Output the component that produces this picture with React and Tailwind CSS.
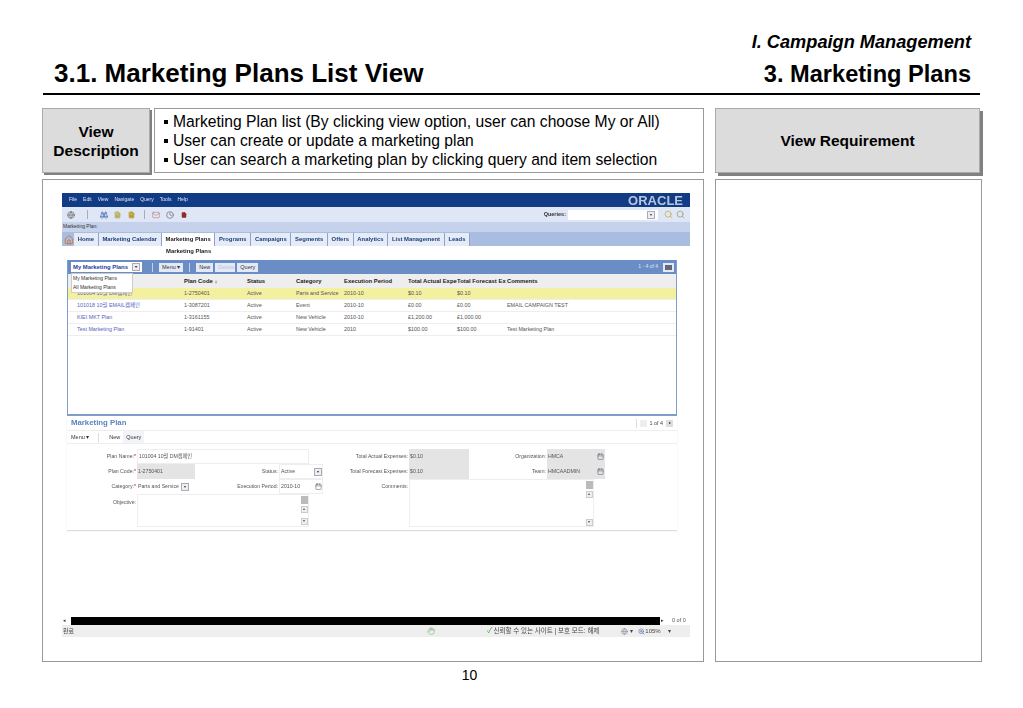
import { Binoculars, FileText, Clock, Mail, Search, Home, ZoomIn, Globe, Hand, Calendar } from 'lucide-react'

const rows = [
  { name: '101004 10월 DM캠페인', code: '1-2750401', cat: 'Parts and Service', per: '2010-10', act: '$0.10', fc: '$0.10', com: '', on: true },
  { name: '101018 10월 EMAIL캠페인', code: '1-3087201', cat: 'Event', per: '2010-10', act: '£0.00', fc: '£0.00', com: 'EMAIL CAMPAIGN TEST' },
  { name: 'KIEI MKT Plan', code: '1-3161155', cat: 'New Vehicle', per: '2010-10', act: '£1,200.00', fc: '£1,000.00', com: '' },
  { name: 'Test Marketing Plan', code: '1-91401', cat: 'New Vehicle', per: '2010', act: '$100.00', fc: '$100.00', com: 'Test Marketing Plan' },
]

const tabs = ['Home', 'Marketing Calendar', 'Marketing Plans', 'Programs', 'Campaigns', 'Segments', 'Offers', 'Analytics', 'List Management', 'Leads']
const menus = ['File', 'Edit', 'View', 'Navigate', 'Query', 'Tools', 'Help']
const tableCols = 'grid grid-cols-[107px_63px_49px_48px_64px_49px_50px_1fr] pl-[9px]'
const notes = [
  'Marketing Plan list (By clicking view option, user can choose My or All)',
  'User can create or update a marketing plan',
  'User can search a marketing plan by clicking query and item selection',
]

function Btn({ children, className = '' }) {
  return <span className={`flex h-[9px] items-center bg-[#e3e9f6] px-[3px] text-[5.5px] text-[#333] ${className}`}>{children}</span>
}

function Label({ children, req }) {
  return (
    <span className="flex items-center justify-end whitespace-nowrap pr-[1px] text-[#555]">
      {children}
      {req && <span className="text-[#c00]">*</span>}
    </span>
  )
}

function Pick() {
  return <span className="flex h-[8px] w-[8px] shrink-0 items-center justify-center border border-[#aab] bg-[#eee] text-[4px] leading-none text-[#333]">▾</span>
}

function Cal() {
  return <Calendar className="h-[7px] w-[7px] shrink-0 text-[#667]" />
}

function Scroll() {
  return (
    <div className="flex h-full w-[8px] flex-col items-center gap-[2px] text-[4px] leading-none text-[#555]">
      <span className="h-[8px] w-[7px] bg-[#bbb]" />
      <span className="h-[7px] w-[7px] border border-[#ccc] bg-[#eee] text-center">▴</span>
      <span className="flex-1" />
      <span className="h-[7px] w-[7px] border border-[#ccc] bg-[#eee] text-center">▾</span>
    </div>
  )
}

function Shot() {
  return (
    <div className="flex h-[444px] w-[628px] flex-col font-['Liberation_Sans',sans-serif] blur-[0.5px]">
      {/* menu bar */}
      <div className="flex h-[14px] items-center bg-[#113b85] pl-[7px] pr-[7px] text-[5px] text-[#dfe6f5]">
        <div className="flex gap-[6px]">{menus.map(m => <span key={m}>{m}</span>)}</div>
        <span className="ml-auto text-[13px] font-bold leading-none text-[#b7c5dd]">ORACLE</span>
      </div>
      {/* toolbar */}
      <div className="flex h-[15px] items-center bg-[#dfe6f6] pl-[5px] pr-[5px]">
        <Globe className="h-[8px] w-[8px] text-[#666]" />
        <span className="ml-[12px] h-[9px] w-px bg-[#aab]" />
        <Binoculars className="ml-[12px] h-[8px] w-[8px] text-[#3f66ad]" />
        <FileText className="ml-[6px] h-[8px] w-[7px] fill-[#e4d98a] text-[#8a8440]" />
        <FileText className="ml-[7px] h-[8px] w-[7px] fill-[#e6c84a] text-[#8a7420]" />
        <span className="ml-[9px] h-[9px] w-px bg-[#aab]" />
        <Mail className="ml-[7px] h-[8px] w-[8px] text-[#b98a8a]" />
        <Clock className="ml-[6px] h-[8px] w-[8px] text-[#667]" />
        <FileText className="ml-[7px] h-[8px] w-[6px] fill-[#a33] text-[#722]" />
        <span className="ml-auto text-[5.5px] font-bold text-[#333]">Queries:</span>
        <span className="ml-[2px] flex h-[10px] w-[90px] items-center justify-end bg-white pr-[3px]"><Pick /></span>
        <Search className="ml-[6px] h-[9px] w-[9px] text-[#c9a94a]" />
        <Search className="ml-[3px] h-[9px] w-[9px] text-[#9aa060]" />
      </div>
      <div className="flex h-[10px] items-center bg-[#c6d2ec] pl-[1px] text-[5px] text-[#333]">Marketing Plan:</div>
      {/* tabs */}
      <div className="flex h-[14px] items-end bg-[#a9bde1] pl-[2px]">
        <Home className="mb-[1px] h-[10px] w-[10px] text-[#c8702a]" />
        {tabs.map(t => (
          <span key={t} className={`flex h-[13px] items-center whitespace-nowrap border-r border-[#8ea4cc] px-[3.7px] text-[5.9px] font-bold text-[#1c3f7a] ${t === 'Marketing Plans' ? 'bg-white text-[#222]' : 'bg-[#e5ebf7]'}`}>{t}</span>
        ))}
      </div>
      <div className="flex h-[10px] items-center pl-[104px] text-[5.9px] font-bold text-[#222]">Marketing Plans</div>
      {/* list applet */}
      <div className="relative ml-[5px] mt-[4px] flex h-[156px] w-[610px] flex-col border-b-2 border-l border-r border-[#7f9ccb]">
        <div className="flex h-[14px] items-center bg-[#6b8dc5] pl-[3px] pr-[2px]">
          <span className="flex h-[10px] w-[71px] items-center justify-between bg-white px-[2px] text-[5.9px] font-bold text-[#1c3fa0]">My Marketing Plans<Pick /></span>
          <span className="ml-[10px] mr-[6px] h-[9px] w-px bg-[#c6d2ec]" />
          <Btn>Menu ▾</Btn>
          <span className="ml-[6px] mr-[6px] h-[9px] w-px bg-[#c6d2ec]" />
          <Btn>New</Btn>
          <Btn className="ml-[2px] w-[20px] bg-[#b9c6de] text-[#b9c6de]">Delete</Btn>
          <Btn className="ml-[2px]">Query</Btn>
          <span className="ml-auto text-[5px] text-[#dfe6f5]">1 - 4 of 4</span>
          <span className="ml-[5px] flex h-[9px] w-[11px] items-center justify-center bg-[#e3e9f6]"><span className="h-[5px] w-[7px] bg-[#667]" /></span>
        </div>
        <div className={`${tableCols} h-[14px] items-center bg-[#eeeeee] text-[5.9px] font-bold text-[#222]`}>
          <span className="pl-[47px]">e</span>
          <span>Plan Code ↓</span>
          <span>Status</span>
          <span>Category</span>
          <span className="whitespace-nowrap">Execution Period</span>
          <span className="overflow-hidden whitespace-nowrap">Total Actual Expe</span>
          <span className="overflow-hidden whitespace-nowrap">Total Forecast Ex</span>
          <span>Comments</span>
        </div>
        {rows.map(r => (
          <div key={r.code} className={`${tableCols} h-[12px] items-center border-b border-[#eee] text-[5.4px] text-[#555] ${r.on ? 'bg-[#f3f0a0]' : 'bg-white'}`}>
            <span className="font-['Liberation_Sans','Noto_Sans_CJK_KR',sans-serif] text-[#5a5fc0]">{r.name}</span>
            <span>{r.code}</span>
            <span>Active</span>
            <span className="whitespace-nowrap">{r.cat}</span>
            <span>{r.per}</span>
            <span>{r.act}</span>
            <span>{r.fc}</span>
            <span>{r.com}</span>
          </div>
        ))}
        {/* selected row marker and open view dropdown */}
        <span className="absolute left-[3px] top-[29px] text-[5px] leading-none text-black">➤</span>
        <div className="absolute left-[3px] top-[13px] flex h-[20px] w-[62px] flex-col justify-center gap-[2px] border border-[#ccc] bg-white pl-[1px] text-[5px] text-[#333]">
          <span>My Marketing Plans</span>
          <span>All Marketing Plans</span>
        </div>
      </div>
      {/* form applet */}
      <div className="ml-[5px] flex w-[610px] flex-col shadow-[0_1px_1px_#ddd]">
        <div className="flex h-[15px] items-center justify-between border-b border-[#eee] pl-[4px] pr-[4px]">
          <span className="text-[7.8px] font-bold text-[#5b83c0]">Marketing Plan</span>
          <div className="flex items-center gap-[3px] text-[5.4px] text-[#444]">
            <span className="h-[9px] w-px bg-[#ddd]" />
            <span className="h-[7px] w-[7px] bg-[#eee]" />
            <span>1 of 4</span>
            <span className="flex h-[7px] w-[7px] items-center justify-center bg-[#ddd] text-[4px] text-[#222]">▸</span>
          </div>
        </div>
        <div className="flex h-[13px] items-center border-b border-[#eee] pl-[4px] text-[5.5px] text-[#333]">
          <span>Menu ▾</span>
          <span className="ml-[9px] h-[9px] w-px bg-[#ddd]" />
          <span className="ml-[7px] flex h-[12px] items-center px-[3px]">New</span>
          <span className="flex h-[12px] items-center bg-[#f2f4fa] px-[3px]">Query</span>
        </div>
        <div className="grid h-[86px] grid-cols-[70px_58px_84px_44px_86px_60px_78px_58px] grid-rows-[15px_15px_15px_33px] content-start pt-[5px] text-[5.2px] text-[#555]">
          <Label req>Plan Name:</Label>
          <span className="col-span-3 flex w-[172px] items-center border border-[#eee] pl-[1px] font-['Liberation_Sans','Noto_Sans_CJK_KR',sans-serif]">101004 10월 DM캠페인</span>
          <Label>Total Actual Expenses:</Label>
          <span className="flex items-center bg-[#e4e4e4] pl-[1px]">$0.10</span>
          <Label>Organization:</Label>
          <span className="flex items-center justify-between bg-[#e4e4e4] px-[1px]">HMCA<Cal /></span>

          <Label req>Plan Code:</Label>
          <span className="flex items-center bg-[#e4e4e4] pl-[1px]">1-2750401</span>
          <Label>Status:</Label>
          <span className="flex items-center justify-between border border-[#eee] pl-[1px]">Active<Pick /></span>
          <Label>Total Forecast Expenses:</Label>
          <span className="flex items-center bg-[#e4e4e4] pl-[1px]">$0.10</span>
          <Label>Team:</Label>
          <span className="flex items-center justify-between bg-[#e4e4e4] px-[1px]">HMCAADMIN<Cal /></span>

          <Label req>Category:</Label>
          <span className="flex items-center gap-[2px] whitespace-nowrap pl-[1px]">Parts and Service <Pick /></span>
          <Label>Execution Period:</Label>
          <span className="flex items-center justify-between border border-[#eee] pl-[1px]">2010-10<Cal /></span>
          <Label>Comments:</Label>
          <div className="col-span-3 row-span-2 flex w-[185px] justify-end border border-[#eee] pt-[1px]"><Scroll /></div>

          <div className="flex justify-end pr-[1px] pt-[5px] text-[#555]">Objective:</div>
          <div className="col-span-3 flex w-[172px] justify-end border border-[#eee] py-[1px]"><Scroll /></div>
        </div>
      </div>
      <div className="flex-1" />
      {/* browser status */}
      <div className="flex h-[9px] items-center pl-[1px] text-[5.5px] text-[#334]">
        <span className="w-[8px] text-[5px] leading-none">◂</span>
        <span className="h-[8px] w-[589px] bg-black" />
        <span className="ml-[1px] w-[8px] text-[5px] leading-none">▸</span>
        <span className="ml-[3px] text-[#555]">0 of 0</span>
      </div>
      <div className="flex h-[12px] items-center bg-[#efeeee] pl-[1px] font-['Liberation_Sans','Noto_Sans_CJK_KR',sans-serif] text-[6px] text-[#444]">
        <span>완료</span>
        <Hand className="ml-[353px] h-[8px] w-[8px] text-[#8b8]" />
        <span className="ml-[52px] text-[8px] leading-none text-[#4a4]">✓</span>
        <span className="ml-[1px] whitespace-nowrap text-[6.5px]">신뢰할 수 있는 사이트 | 보호 모드: 해제</span>
        <Globe className="ml-[22px] h-[7px] w-[7px] text-[#889]" />
        <span className="ml-[2px]">▾</span>
        <ZoomIn className="ml-[5px] h-[7px] w-[7px] text-[#56a]" />
        <span>105%</span>
        <span className="ml-[7px]">▾</span>
      </div>
    </div>
  )
}

export default function App() {
  return (
    <div className="flex h-[708px] w-[1023px] flex-col overflow-hidden bg-white font-['Liberation_Sans',sans-serif] text-black">
      <header className="ml-[43px] mr-[43px] mt-[32px] flex h-[63px] items-end justify-between border-b-2 border-black pb-[5px] pl-[11px] pr-[9px]">
        <h1 className="text-[26px] font-bold leading-[30px]">3.1. Marketing Plans List View</h1>
        <div className="flex flex-col items-end">
          <span className="text-[18.2px] font-bold italic leading-[20px]">I. Campaign Management</span>
          <span className="mt-[9px] text-[23.6px] font-bold leading-[27px]">3. Marketing Plans</span>
        </div>
      </header>

      <div className="ml-[42px] mt-[13px] flex">
        <div className="flex h-[65px] w-[108px] items-center justify-center border border-[#aaa] bg-[#dcdcdc] text-center text-[15.5px] font-bold leading-[19px] shadow-[2px_2px_0_#808080]">
          View<br />Description
        </div>
        <div className="ml-[4px] flex h-[65px] w-[550px] flex-col justify-center border border-[#999] pl-[9px] text-[15.65px] leading-[19px]">
          {notes.map(n => (
            <p key={n} className="flex items-center whitespace-nowrap">
              <span className="mr-[5px] h-[4px] w-[4px] bg-black" />
              {n}
            </p>
          ))}
        </div>
        <div className="ml-[11px] flex h-[65px] w-[265px] items-center justify-center border border-[#aaa] bg-[#dcdcdc] text-[15.5px] font-bold shadow-[3px_3px_0_#808080]">
          View Requirement
        </div>
      </div>

      <div className="ml-[42px] mt-[6px] flex">
        <div className="h-[483px] w-[662px] border border-[#999] pl-[19px] pt-[13px]">
          <Shot />
        </div>
        <div className="ml-[11px] h-[483px] w-[267px] border border-[#999]" />
      </div>

      <div className="ml-[42px] mt-[4px] w-[855px] text-center text-[14px] leading-[18px]">10</div>
    </div>
  )
}
